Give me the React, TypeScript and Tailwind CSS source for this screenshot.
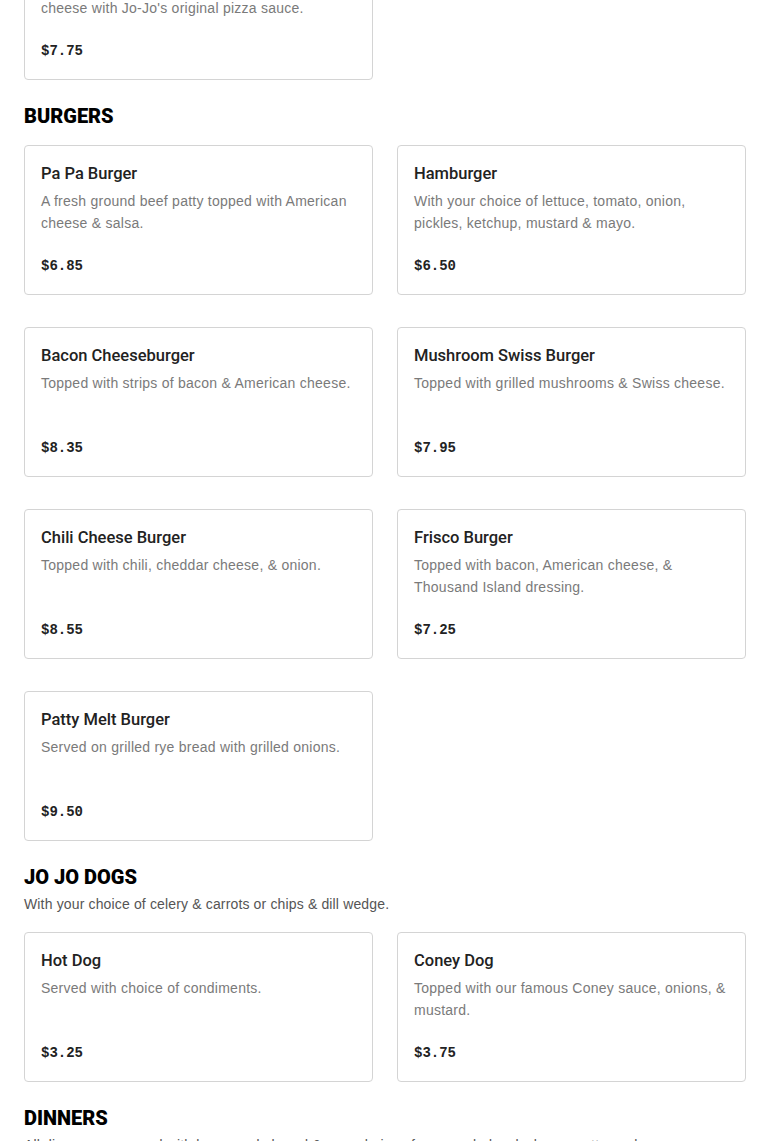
import React from "react";

type Item = { name: string; desc: string; price: string };

const burgers: Item[] = [
  { name: "Pa Pa Burger", desc: "A fresh ground beef patty topped with American cheese & salsa.", price: "$6.85" },
  { name: "Hamburger", desc: "With your choice of lettuce, tomato, onion, pickles, ketchup, mustard & mayo.", price: "$6.50" },
  { name: "Bacon Cheeseburger", desc: "Topped with strips of bacon & American cheese.", price: "$8.35" },
  { name: "Mushroom Swiss Burger", desc: "Topped with grilled mushrooms & Swiss cheese.", price: "$7.95" },
  { name: "Chili Cheese Burger", desc: "Topped with chili, cheddar cheese, & onion.", price: "$8.55" },
  { name: "Frisco Burger", desc: "Topped with bacon, American cheese, & Thousand Island dressing.", price: "$7.25" },
  { name: "Patty Melt Burger", desc: "Served on grilled rye bread with grilled onions.", price: "$9.50" },
];

const dogs: Item[] = [
  { name: "Hot Dog", desc: "Served with choice of condiments.", price: "$3.25" },
  { name: "Coney Dog", desc: "Topped with our famous Coney sauce, onions, & mustard.", price: "$3.75" },
];

function MenuCard({ item }: { item: Item }) {
  return (
    <div className="flex h-[150px] flex-col rounded-[4px] border border-[#d4d4d4] bg-white px-4 py-4">
      <h4 className="font-['Roboto',sans-serif] text-[16.5px] leading-6 font-medium text-[#222]">{item.name}</h4>
      <p className="mt-[4px] font-['Liberation_Sans',Arial,sans-serif] text-sm leading-[22px] tracking-[0.25px] text-[#7a7a7a]">
        {item.desc}
      </p>
      <p className="mt-auto pt-px font-['Liberation_Mono',monospace] text-sm leading-6 font-bold text-[#222]">{item.price}</p>
    </div>
  );
}

function SectionTitle({ children }: { children: React.ReactNode }) {
  return <h3 className="font-['Roboto',sans-serif] text-[20px] leading-6 font-black text-black">{children}</h3>;
}

export default function App() {
  return (
    <div className="h-[1141px] overflow-hidden bg-white">
      <div className="-mt-[70px] px-6">
        <div className="grid grid-cols-2 gap-x-6 gap-y-8">
          <MenuCard
            item={{
              name: "Cheese Pizza",
              desc: "Topped with a blend of mozzarella & provolone cheese with Jo-Jo's original pizza sauce.",
              price: "$7.75",
            }}
          />
        </div>

        <section className="mt-6">
          <SectionTitle>BURGERS</SectionTitle>
          <div className="mt-[17px] grid grid-cols-2 gap-x-6 gap-y-8">
            {burgers.map((b) => (
              <MenuCard key={b.name} item={b} />
            ))}
          </div>
        </section>

        <section className="mt-6">
          <SectionTitle>JO JO DOGS</SectionTitle>
          <p className="mt-1 font-['Liberation_Sans',Arial,sans-serif] text-sm leading-[22px] tracking-[0.15px] text-[#555]">
            With your choice of celery &amp; carrots or chips &amp; dill wedge.
          </p>
          <div className="mt-[17px] grid grid-cols-2 gap-x-6 gap-y-8">
            {dogs.map((d) => (
              <MenuCard key={d.name} item={d} />
            ))}
          </div>
        </section>

        <section className="mt-6">
          <SectionTitle>DINNERS</SectionTitle>
          <p className="mt-1 font-['Liberation_Sans',Arial,sans-serif] text-sm leading-[22px] tracking-[0.15px] text-[#555]">
            All dinners are served with homemade bread &amp; your choice of soup, salad, coleslaw or cottage cheese.
          </p>
        </section>
      </div>
    </div>
  );
}
